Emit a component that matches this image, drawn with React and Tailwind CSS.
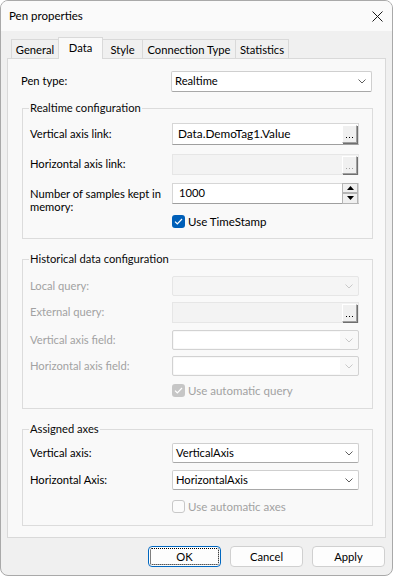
import React from 'react'

function Chevron({ disabled = false }) {
    return (
        <svg width="8" height="5" viewBox="0 0 8 5" className="shrink-0">
            <path d="M0.5 0.5L4 4L7.5 0.5" fill="none" stroke={disabled ? '#c9c9c9' : '#5f5f5f'} strokeWidth="1" />
        </svg>
    )
}

function Dots({ disabled = false }) {
    return (
        <div className="w-[15px] h-[18px] bg-[#f0f0f0] border border-white border-r-[#a0a0a0] border-b-[#a0a0a0] shadow-[1px_1px_0_#6f6f6f] flex items-end justify-center pb-[4px] gap-[2px]">
            <span className={`w-px h-px ${disabled ? 'bg-[#a0a0a0]' : 'bg-black'}`} />
            <span className={`w-px h-px ${disabled ? 'bg-[#a0a0a0]' : 'bg-black'}`} />
            <span className={`w-px h-px ${disabled ? 'bg-[#a0a0a0]' : 'bg-black'}`} />
        </div>
    )
}

function Check({ state }) {
    if (state === 'on') {
        return (
            <div className="w-[13px] h-[13px] rounded-[3px] bg-[#005fb8] flex items-center justify-center">
                <svg width="9" height="7" viewBox="0 0 9 7">
                    <path d="M1 3.6L3.3 5.8L8 1" fill="none" stroke="#fff" strokeWidth="1.2" />
                </svg>
            </div>
        )
    }
    if (state === 'disabledOn') {
        return (
            <div className="w-[13px] h-[13px] rounded-[3px] bg-[#c6c6c6] flex items-center justify-center">
                <svg width="9" height="7" viewBox="0 0 9 7">
                    <path d="M1 3.6L3.3 5.8L8 1" fill="none" stroke="#fff" strokeWidth="1.2" />
                </svg>
            </div>
        )
    }
    return <div className="w-[13px] h-[13px] rounded-[3px] border border-[#c8c8c8] bg-[#fbfbfb]" />
}

function Label({ children, disabled }) {
    return (
        <div className={`w-[142px] shrink-0 ${disabled ? 'text-[#a2a2a2]' : 'text-black'}`}>{children}</div>
    )
}

function CheckRow({ state, children, disabled, className = '' }) {
    return (
        <div className={`flex items-center pl-[142px] gap-[3px] ${className}`}>
            <Check state={state} />
            <span className={`leading-[13px] text-[11.5px] ${disabled ? 'text-[#a2a2a2]' : 'text-black'}`}>{children}</span>
        </div>
    )
}

function Group({ title, className = '', children }) {
    return (
        <fieldset className={`w-[351px] border border-[#dcdcdc] pl-[7px] ${className}`}>
            <legend className="px-[1px] -ml-px leading-[16px] text-[#0a0a0a]">{title}</legend>
            {children}
        </fieldset>
    )
}

function Tab({ children, active, className = '' }) {
    if (active) {
        return (
            <div className={`relative z-10 -mb-px h-[22px] -ml-px bg-[#f9f9f9] border border-[#d9d9d9] border-b-0 flex justify-center pt-[3px] leading-[14px] ${className}`}>
                {children}
            </div>
        )
    }
    return (
        <div className={`h-[19px] -ml-px bg-[#f0f0f0] border border-[#d9d9d9] border-b-0 flex justify-center pt-[3px] leading-[14px] ${className}`}>
            {children}
        </div>
    )
}

export default function App() {
    return (
        <div className="w-[393px] h-[576px] bg-[#f0f0f0] border border-[#a9a9a9] rounded-[8px] overflow-hidden flex flex-col text-[11.2px] text-black font-[family-name:Lato,'Liberation_Sans',sans-serif]">
            <div className="h-[30px] shrink-0 bg-[#fafafa] flex items-center justify-between pl-[8px] pr-[9px]">
                <span className="text-[11.5px]">Pen properties</span>
                <svg width="11" height="11" viewBox="0 0 11 11">
                    <path d="M0.5 0.5L10.5 10.5M10.5 0.5L0.5 10.5" stroke="#1a1a1a" strokeWidth="1" />
                </svg>
            </div>

            <div className="h-[27px] shrink-0 flex items-end pl-[10px]">
                <Tab className="w-[48px] ml-0">General</Tab>
                <Tab active className="w-[45px]">Data</Tab>
                <Tab className="w-[41px]">Style</Tab>
                <Tab className="w-[94px]">Connection Type</Tab>
                <Tab className="w-[54px]">Statistics</Tab>
            </div>

            <div className="mx-[6px] w-[379px] h-[480px] shrink-0 border border-[#d9d9d9] bg-[#f9f9f9] pl-[14px] pt-[12px]">
                <div className="flex items-center h-[21px]">
                    <div className="w-[150px] shrink-0 -ml-px">Pen type:</div>
                    <div className="w-[201px] h-[21px] bg-white border border-[#cfcfcf] border-b-[#a8a8a8] rounded-[2px] flex items-center justify-between pl-[3px] pr-[5px]">
                        <span>Realtime</span>
                        <Chevron />
                    </div>
                </div>

                <Group title="Realtime configuration" className="mt-[8px] pt-[7px] pb-[10px]">
                    <div className="flex items-center h-[22px]">
                        <Label>Vertical axis link:</Label>
                        <div className="w-[187px] h-[22px] bg-white border border-[#d6d6d6] border-b-[#9f9f9f] flex items-center justify-between pl-[5px] pr-px">
                            <span className="text-[11.8px]">Data.DemoTag1.Value</span>
                            <Dots />
                        </div>
                    </div>
                    <div className="flex items-center h-[21px] mt-[9px]">
                        <Label>Horizontal axis link:</Label>
                        <div className="w-[187px] h-[21px] bg-[#f3f3f3] border border-[#e6e6e6] flex items-center justify-end pr-px">
                            <Dots disabled />
                        </div>
                    </div>
                    <div className="flex items-start h-[30px] mt-[8px]">
                        <div className="w-[142px] shrink-0 leading-[13px] mt-[4px]">Number of samples kept in memory:</div>
                        <div className="w-[187px] h-[21px] bg-white border border-[#d6d6d6] border-b-[#9f9f9f] flex items-center justify-between pl-[6px]">
                            <span>1000</span>
                            <div className="flex flex-col w-[16px] h-[21px] -mt-px">
                                <div className="h-[10px] bg-[#f0f0f0] border border-[#b4b4b4] flex items-center justify-center">
                                    <svg width="7" height="4" viewBox="0 0 7 4"><path d="M0 4L3.5 0L7 4Z" fill="#000" /></svg>
                                </div>
                                <div className="h-[11px] bg-[#f0f0f0] border border-[#b4b4b4] flex items-center justify-center">
                                    <svg width="7" height="4" viewBox="0 0 7 4"><path d="M0 0L3.5 4L7 0Z" fill="#000" /></svg>
                                </div>
                            </div>
                        </div>
                    </div>
                    <CheckRow state="on" className="mt-[2px]">Use TimeStamp</CheckRow>
                </Group>

                <Group title="Historical data configuration" className="mt-[12px] pt-[9px] pb-[11px]">
                    <div className="flex items-center h-[20px]">
                        <Label disabled>Local query:</Label>
                        <div className="w-[187px] h-[20px] bg-[#f5f5f5] border border-[#e6e6e6] rounded-[2px] flex items-center justify-end pr-[5px]">
                            <Chevron disabled />
                        </div>
                    </div>
                    <div className="flex items-center h-[21px] mt-[6px]">
                        <Label disabled>External query:</Label>
                        <div className="w-[187px] h-[21px] bg-[#f3f3f3] border border-[#e6e6e6] flex items-center justify-end pr-px">
                            <Dots />
                        </div>
                    </div>
                    <div className="flex items-center h-[20px] mt-[7px]">
                        <Label disabled>Vertical axis field:</Label>
                        <div className="w-[187px] h-[20px] bg-[#f8f8f8] border border-[#d2d2d2] rounded-[2px] flex items-center justify-between pl-px pr-[5px]">
                            <div className="w-[166px] h-[16px] bg-white" />
                            <Chevron disabled />
                        </div>
                    </div>
                    <div className="flex items-center h-[20px] mt-[6px]">
                        <Label disabled>Horizontal axis field:</Label>
                        <div className="w-[187px] h-[20px] bg-[#f8f8f8] border border-[#d2d2d2] rounded-[2px] flex items-center justify-between pl-px pr-[5px]">
                            <div className="w-[166px] h-[16px] bg-white" />
                            <Chevron disabled />
                        </div>
                    </div>
                    <CheckRow state="disabledOn" disabled className="mt-[8px]">Use automatic query</CheckRow>
                </Group>

                <Group title="Assigned axes" className="mt-[12px] pt-[6px] pb-[12px]">
                    <div className="flex items-center h-[20px]">
                        <Label>Vertical axis:</Label>
                        <div className="w-[187px] h-[20px] bg-white border border-[#cfcfcf] border-b-[#a8a8a8] rounded-[2px] flex items-center justify-between pl-[3px] pr-[5px]">
                            <span>VerticalAxis</span>
                            <Chevron />
                        </div>
                    </div>
                    <div className="flex items-center h-[20px] mt-[7px]">
                        <Label>Horizontal Axis:</Label>
                        <div className="w-[187px] h-[20px] bg-white border border-[#cfcfcf] border-b-[#a8a8a8] rounded-[2px] flex items-center justify-between pl-[3px] pr-[5px]">
                            <span>HorizontalAxis</span>
                            <Chevron />
                        </div>
                    </div>
                    <CheckRow state="off" disabled className="mt-[10px]">Use automatic axes</CheckRow>
                </Group>
            </div>

            <div className="flex justify-end gap-[9px] pr-[7px] mt-[8px]">
                <button className="w-[73px] h-[21px] rounded-[4px] border border-[#0067c0] bg-[#fdfdfd] outline-1 outline-dotted outline-black outline-offset-[-3px] leading-none">OK</button>
                <button className="w-[73px] h-[21px] rounded-[4px] border border-[#d0d0d0] bg-[#fdfdfd] leading-none">Cancel</button>
                <button className="w-[73px] h-[21px] rounded-[4px] border border-[#d0d0d0] bg-[#fdfdfd] leading-none">Apply</button>
            </div>
        </div>
    )
}
